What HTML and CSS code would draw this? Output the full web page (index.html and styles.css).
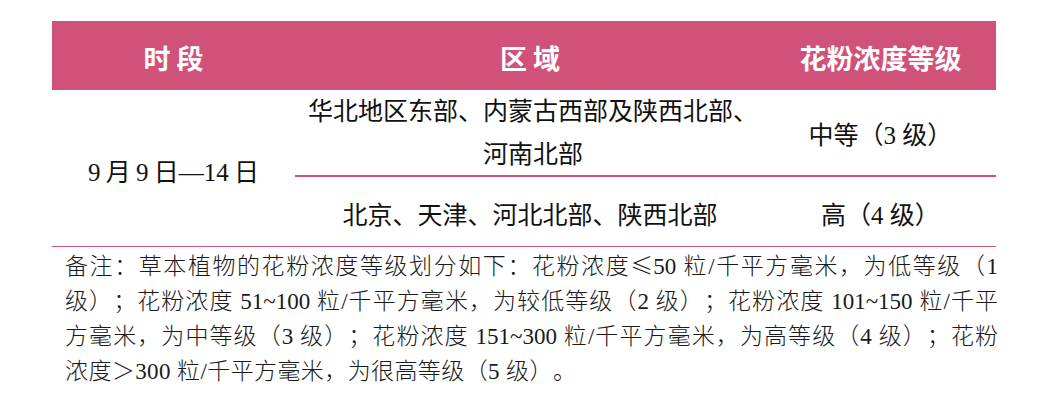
FILE: index.html
```html
<!DOCTYPE html>
<html lang="zh-CN">
<head>
<meta charset="utf-8">
<title>花粉浓度等级</title>
<link rel="stylesheet" href="styles.css">
</head>
<body>
<div class="wrap">
  <div class="table">
    <div class="th">时 段</div>
    <div class="th">区 域</div>
    <div class="th">花粉浓度等级</div>
    <div class="td date">9 月 9 日—14 日</div>
    <div class="td region row1">华北地区东部、内蒙古西部及陕西北部、<br>河南北部</div>
    <div class="td level row1">中等（3 级）</div>
    <div class="td region row2">北京、天津、河北北部、陕西北部</div>
    <div class="td level row2">高（4 级）</div>
  </div>
  <div class="note">
    <div class="line">备注：草本植物的花粉浓度等级划分如下：花粉浓度<span class="cjk">≤</span>50 粒/千平方毫米，为低等级（1</div>
    <div class="line">级）；花粉浓度 51~100 粒/千平方毫米，为较低等级（2 级）；花粉浓度 101~150 粒/千平</div>
    <div class="line">方毫米，为中等级（3 级）；花粉浓度 151~300 粒/千平方毫米，为高等级（4 级）；花粉</div>
    <div class="last">浓度＞300 粒/千平方毫米，为很高等级（5 级）。</div>
  </div>
</div>
</body>
</html>
```

FILE: styles.css
```css
html, body {
  margin: 0;
  padding: 0;
  background: #ffffff;
}

.wrap {
  width: 944px;
  margin-left: 52px;
  padding-top: 21px;
  text-spacing-trim: space-all;
}

.table {
  display: grid;
  grid-template-columns: 243px 470px 231px;
  grid-template-rows: 69px 87px 69px;
  border-bottom: 1px solid #d4587c;
}

.th {
  background: #d05278;
  color: #ffffff;
  font-family: "Noto Sans CJK SC", sans-serif;
  font-weight: 700;
  font-size: 27px;
  display: flex;
  align-items: center;
  justify-content: center;
  padding-top: 3px;
  box-sizing: border-box;
}

.td {
  font-family: "Liberation Serif", "Noto Sans CJK SC", serif;
  font-size: 25px;
  color: #111111;
  display: flex;
  align-items: center;
  justify-content: center;
  text-align: center;
  box-sizing: border-box;
}

.date {
  grid-row: 2 / 4;
  grid-column: 1;
  padding-top: 3px;
  word-spacing: -1px;
}

.region.row1 {
  line-height: 43px;
  display: block;
  padding-top: 0;
  padding-left: 6px;
}

.row1 {
  border-bottom: 2px solid #d05278;
}

.row2 {
  padding-top: 3px;
}

.note {
  width: 933px;
  margin-left: 13px;
  font-family: "Liberation Serif", "Noto Sans CJK SC", serif;
  font-size: 23px;
  line-height: 35px;
  color: #1a1a1a;
  font-weight: 300;
  text-spacing-trim: space-all;
}

.note .line {
  text-align: justify;
  text-align-last: justify;
  white-space: nowrap;
}

.note .last {
  text-align: left;
  white-space: nowrap;
  letter-spacing: 0.4px;
}

.cjk {
  font-family: "Noto Sans CJK SC", sans-serif;
}
```
